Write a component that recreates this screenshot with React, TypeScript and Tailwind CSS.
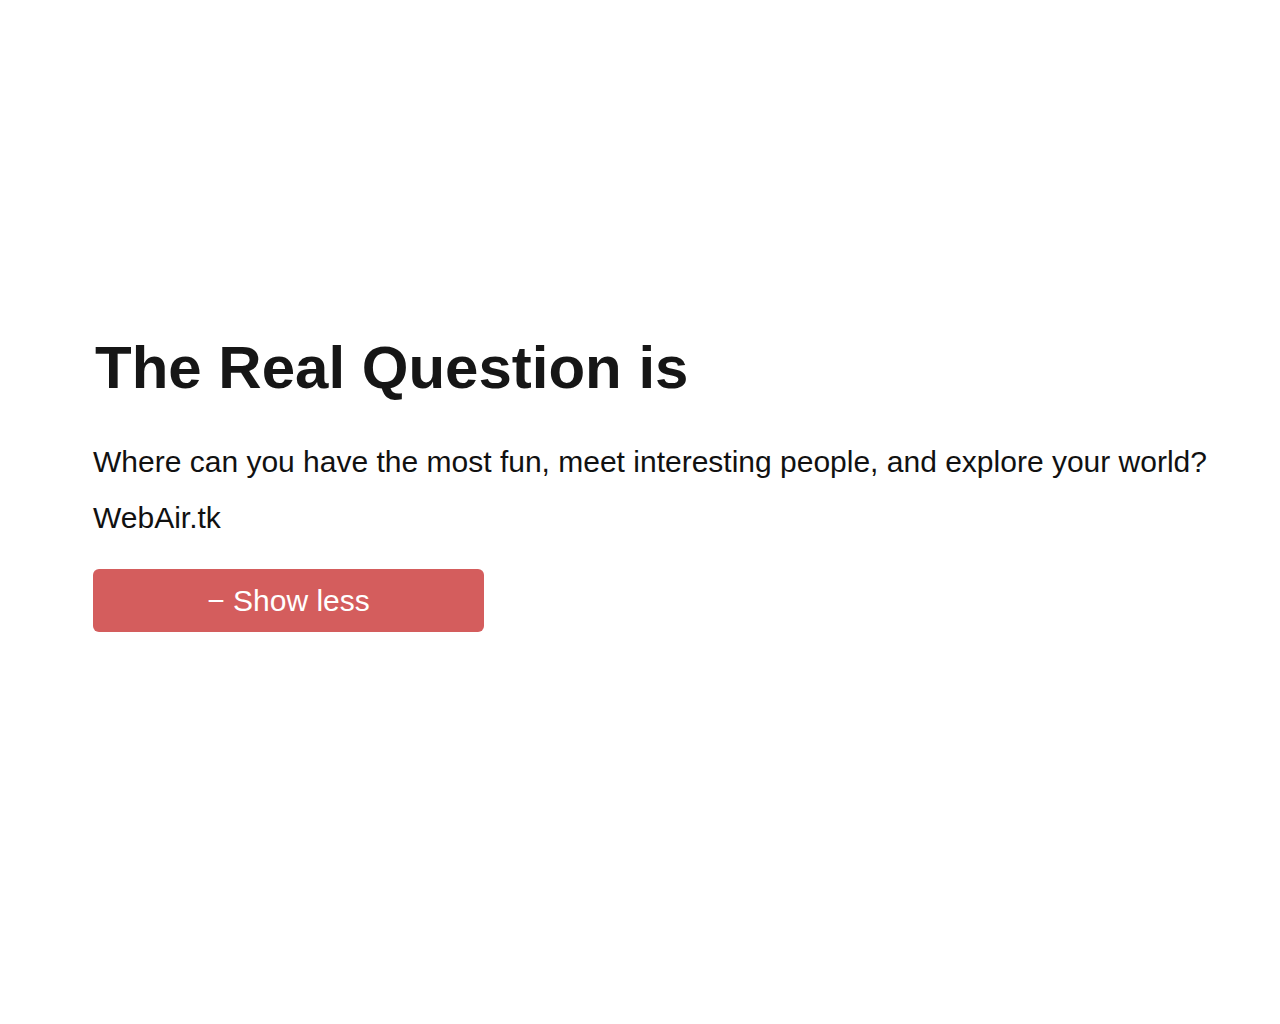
import React, { useState } from 'react';

export default function App() {
  const [open, setOpen] = useState(true);

  return (
    <div className="min-h-[1024px] w-full bg-white font-['Liberation_Sans',Arial,sans-serif] text-[#111]">
      <div className="pl-[93px] pt-[333px]">
        <h1 className="text-[60px] font-bold leading-[70px] text-[#161616] pl-[2px]">The Real Question is</h1>
        <p className="mt-[39px] text-[30px] leading-[40px]">
          Where can you have the most fun, meet interesting people, and explore your world?
        </p>
        {open && <p className="mt-[16px] text-[30px] leading-[40px]">WebAir.tk</p>}
        <button
          onClick={() => setOpen(!open)}
          className="mt-[31px] flex h-[63px] w-[391px] items-center justify-center rounded-[6px] bg-[#d45d5d] text-[30px] text-white"
        >
          {open ? '− Show less' : '+ Show more'}
        </button>
      </div>
    </div>
  );
}
